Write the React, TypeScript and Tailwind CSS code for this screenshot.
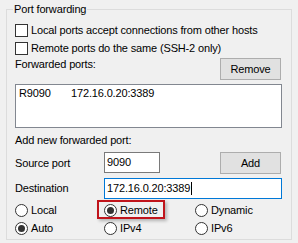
import React from "react";

function CheckBox({ label }: { label: string }) {
  return (
    <div className="flex h-[18px] items-center">
      <span className="h-[13px] w-[13px] border border-[#333333] bg-white" />
      <span className="ml-[3px]">{label}</span>
    </div>
  );
}

function Radio({ label, checked }: { label: string; checked?: boolean }) {
  return (
    <div className="flex h-[18px] items-center">
      <span className="flex h-[13px] w-[13px] items-center justify-center rounded-full border border-[#333333] bg-white">
        {checked && <span className="h-[7px] w-[7px] rounded-full bg-[#333333]" />}
      </span>
      <span className="ml-[3px]">{label}</span>
    </div>
  );
}

function Button({ label }: { label: string }) {
  return (
    <button className="flex h-[22px] w-[61px] items-center justify-center border border-[#adadad] bg-[#e1e1e1] leading-none">
      {label}
    </button>
  );
}

export default function App() {
  return (
    <div
      className="relative h-[243px] w-[298px] bg-[#f0f0f0] pl-[6px] pt-[9px] text-[11px] tracking-[-0.15px] text-black"
      style={{ fontFamily: '"Liberation Sans", Arial, sans-serif' }}
    >
      <div className="relative h-[231px] w-[286px] border border-[#dcdcdc] pl-[8px] pr-[9px] pt-[11px]">
        <span className="absolute left-[6px] top-[-8px] bg-[#f0f0f0] px-[1px] leading-[14px]">
          Port forwarding
        </span>

        <CheckBox label="Local ports accept connections from other hosts" />
        <CheckBox label="Remote ports do the same (SSH-2 only)" />

        <div className="mt-[1px] flex items-start justify-between pr-[1px]">
          <span className="mt-[-1px] leading-[14px]">Forwarded ports:</span>
          <Button label="Remove" />
        </div>

        <div className="mt-[4px] h-[44px] w-full border border-[#828790] bg-white px-[3px] pt-[1px]">
          <div className="flex leading-[14px]">
            <span className="w-[52px]">R9090</span>
            <span>172.16.0.20:3389</span>
          </div>
        </div>

        <div className="mt-[5px] leading-[14px]">Add new forwarded port:</div>

        <div className="mt-[5px] flex h-[22px] items-center pr-[1px]">
          <span className="w-[89px]">Source port</span>
          <span className="flex h-[21px] w-[56px] items-center self-start border border-[#7a7a7a] bg-white px-[2px]">
            9090
          </span>
          <span className="ml-auto">
            <Button label="Add" />
          </span>
        </div>

        <div className="mt-[4px] flex h-[21px] items-center">
          <span className="w-[89px]">Destination</span>
          <span className="flex h-[21px] flex-1 items-center border border-[#0078d7] bg-white px-[2px]">
            172.16.0.20:3389
            <span className="ml-[1px] h-[13px] w-[1px] bg-black" />
          </span>
        </div>

        <div className="mt-[2px] grid grid-cols-[89px_91px_1fr]">
          <Radio label="Local" />
          <div className="relative">
            <Radio label="Remote" checked />
            <span className="absolute left-[-7px] top-[-1px] h-[19px] w-[68px] border-2 border-[#c0141b] shadow-[2px_2px_3px_rgba(0,0,0,0.25)]" />
          </div>
          <Radio label="Dynamic" />
          <Radio label="Auto" checked />
          <Radio label="IPv4" />
          <Radio label="IPv6" />
        </div>
      </div>
    </div>
  );
}
